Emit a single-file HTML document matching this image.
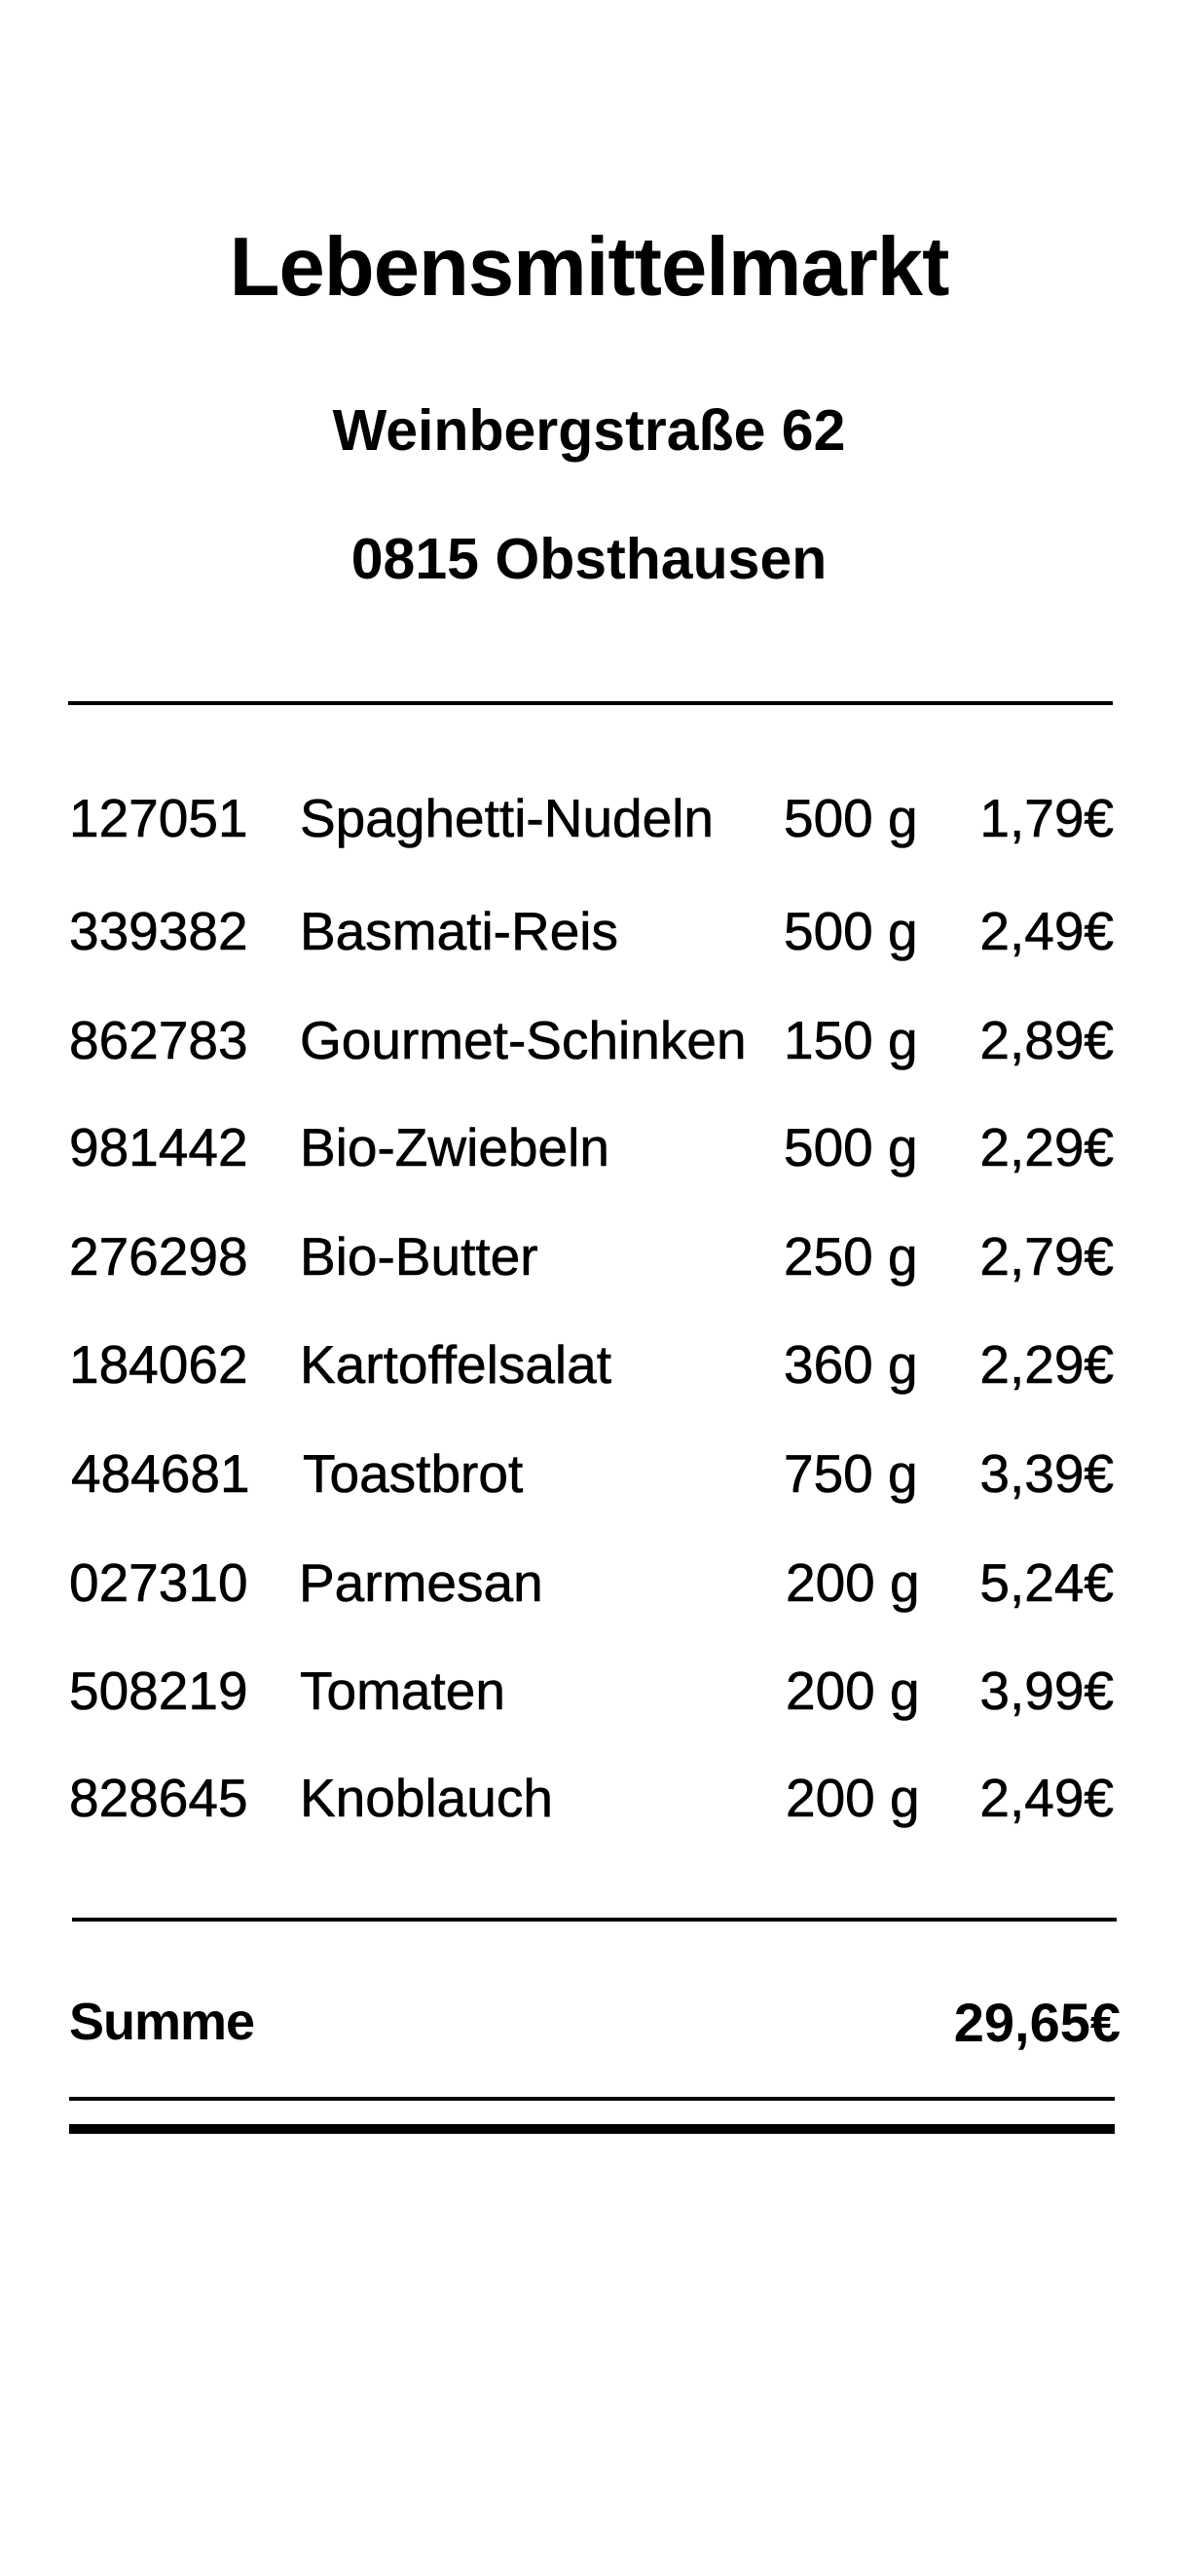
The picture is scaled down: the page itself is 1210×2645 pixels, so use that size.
<!DOCTYPE html>
<html><head><meta charset="utf-8"><style>
html,body{margin:0;padding:0;background:#fff;}
body{width:1210px;height:2645px;position:relative;overflow:hidden;font-family:"Liberation Sans",Arial,sans-serif;color:#000;}
.a{position:absolute;line-height:1;white-space:nowrap;}
.c{left:0;width:1210px;text-align:center;font-weight:bold;}
.r{font-size:55px;-webkit-text-stroke:0.6px #000;}
.hr{position:absolute;background:#000;}
</style></head><body>
<div class="a c" style="top:232px;font-size:85px;letter-spacing:-1px;">Lebensmittelmarkt</div>
<div class="a c" style="top:413px;font-size:59px;">Weinbergstraße 62</div>
<div class="a c" style="top:545px;font-size:59px;">0815 Obsthausen</div>
<div class="hr" style="left:70px;width:1073px;top:720px;height:4px;"></div>

<div class="a r" style="top:813px;left:71px">127051</div><div class="a r" style="top:813px;left:308px">Spaghetti-Nudeln</div><div class="a r" style="top:813px;left:805px">500 g</div><div class="a r" style="top:813px;right:66px">1,79€</div>
<div class="a r" style="top:929px;left:71px">339382</div><div class="a r" style="top:929px;left:308px">Basmati-Reis</div><div class="a r" style="top:929px;left:805px">500 g</div><div class="a r" style="top:929px;right:66px">2,49€</div>
<div class="a r" style="top:1041px;left:71px">862783</div><div class="a r" style="top:1041px;left:308px">Gourmet-Schinken</div><div class="a r" style="top:1041px;left:805px">150 g</div><div class="a r" style="top:1041px;right:66px">2,89€</div>
<div class="a r" style="top:1151px;left:71px">981442</div><div class="a r" style="top:1151px;left:308px">Bio-Zwiebeln</div><div class="a r" style="top:1151px;left:805px">500 g</div><div class="a r" style="top:1151px;right:66px">2,29€</div>
<div class="a r" style="top:1263px;left:71px">276298</div><div class="a r" style="top:1263px;left:308px">Bio-Butter</div><div class="a r" style="top:1263px;left:805px">250 g</div><div class="a r" style="top:1263px;right:66px">2,79€</div>
<div class="a r" style="top:1374px;left:71px">184062</div><div class="a r" style="top:1374px;left:308px">Kartoffelsalat</div><div class="a r" style="top:1374px;left:805px">360 g</div><div class="a r" style="top:1374px;right:66px">2,29€</div>
<div class="a r" style="top:1486px;left:73px">484681</div><div class="a r" style="top:1486px;left:311px">Toastbrot</div><div class="a r" style="top:1486px;left:805px">750 g</div><div class="a r" style="top:1486px;right:66px">3,39€</div>
<div class="a r" style="top:1598px;left:71px">027310</div><div class="a r" style="top:1598px;left:307px">Parmesan</div><div class="a r" style="top:1598px;left:807px">200 g</div><div class="a r" style="top:1598px;right:66px">5,24€</div>
<div class="a r" style="top:1709px;left:71px">508219</div><div class="a r" style="top:1709px;left:308px">Tomaten</div><div class="a r" style="top:1709px;left:807px">200 g</div><div class="a r" style="top:1709px;right:66px">3,99€</div>
<div class="a r" style="top:1819px;left:71px">828645</div><div class="a r" style="top:1819px;left:308px">Knoblauch</div><div class="a r" style="top:1819px;left:807px">200 g</div><div class="a r" style="top:1819px;right:66px">2,49€</div>

<div class="hr" style="left:74px;width:1073px;top:1969px;height:4px;"></div>
<div class="a" style="top:2049px;left:71px;font-size:54px;font-weight:bold;letter-spacing:-1px;">Summe</div>
<div class="a" style="top:2049px;right:59px;font-size:56px;font-weight:bold;">29,65€</div>
<div class="hr" style="left:71px;width:1074px;top:2153px;height:4px;"></div>
<div class="hr" style="left:71px;width:1074px;top:2181px;height:10px;"></div>
</body></html>
